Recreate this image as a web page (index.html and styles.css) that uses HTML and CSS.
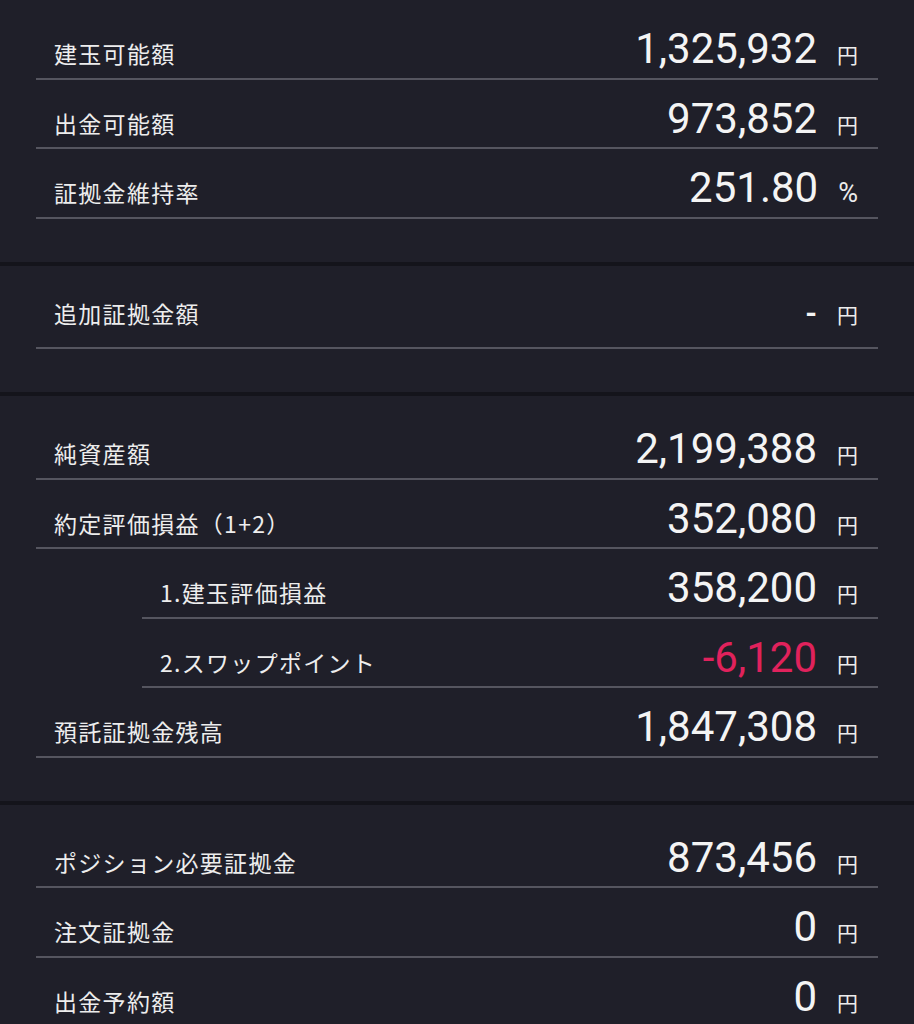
FILE: index.html
```html
<!DOCTYPE html>
<html lang="ja">
<head>
<meta charset="utf-8">
<title>証拠金状況</title>
<link rel="stylesheet" href="styles.css">
</head>
<body>
<main class="page">
  <section class="group first">
    <div class="row"><span class="label">建玉可能額</span><span class="value">1,325,932</span><span class="unit">円</span></div>
    <div class="row"><span class="label">出金可能額</span><span class="value">973,852</span><span class="unit">円</span></div>
    <div class="row"><span class="label">証拠金維持率</span><span class="value">251.80</span><span class="unit pct">%</span></div>
  </section>
  <section class="group">
    <div class="row"><span class="label">追加証拠金額</span><span class="value dash">-</span><span class="unit">円</span></div>
  </section>
  <section class="group">
    <div class="row"><span class="label">純資産額</span><span class="value">2,199,388</span><span class="unit">円</span></div>
    <div class="row"><span class="label">約定評価損益（1+2）</span><span class="value">352,080</span><span class="unit">円</span></div>
    <div class="row sub"><span class="label">1.建玉評価損益</span><span class="value">358,200</span><span class="unit">円</span></div>
    <div class="row sub"><span class="label">2.スワップポイント</span><span class="value neg">-6,120</span><span class="unit">円</span></div>
    <div class="row"><span class="label">預託証拠金残高</span><span class="value">1,847,308</span><span class="unit">円</span></div>
  </section>
  <section class="group">
    <div class="row"><span class="label">ポジション必要証拠金</span><span class="value">873,456</span><span class="unit">円</span></div>
    <div class="row"><span class="label">注文証拠金</span><span class="value">0</span><span class="unit">円</span></div>
    <div class="row"><span class="label">出金予約額</span><span class="value">0</span><span class="unit">円</span></div>
  </section>
</main>
</body>
</html>
```
FILE: styles.css
```css
html, body {
  margin: 0;
  padding: 0;
  background: #1f1f29;
}
body {
  font-family: "Noto Sans CJK JP", "Noto Sans", sans-serif;
  color: #ededed;
}
.page {
  display: flex;
  flex-direction: column;
}
.group {
  padding: 14px 36px 43px;
  border-bottom: 4px solid #14141b;
}
.group.first {
  padding-top: 10px;
}
.row {
  box-sizing: border-box;
  height: 69.5px;
  display: flex;
  align-items: baseline;
  padding: 18px 20px 0 18px;
  border-bottom: 2px solid #55555f;
}
.row.sub {
  margin-left: 106px;
}
.label {
  flex: 1;
  font-size: 23px;
  letter-spacing: 1.3px;
  line-height: 1;
  white-space: nowrap;
}
.value {
  font-family: Roboto, "Liberation Sans", sans-serif;
  font-size: 42px;
  line-height: 1;
  color: #f4f4f4;
}
.value.neg {
  color: #e0225c;
}
.value.dash {
  font-size: 30px;
  font-weight: 700;
  color: #f4f4f4;
}
.unit {
  font-size: 21px;
  line-height: 1;
  margin-left: 20px;
  color: #ececec;
}
.unit.pct {
  font-family: Roboto, "Liberation Sans", sans-serif;
  font-size: 27px;
  margin-left: 20px;
}
```
